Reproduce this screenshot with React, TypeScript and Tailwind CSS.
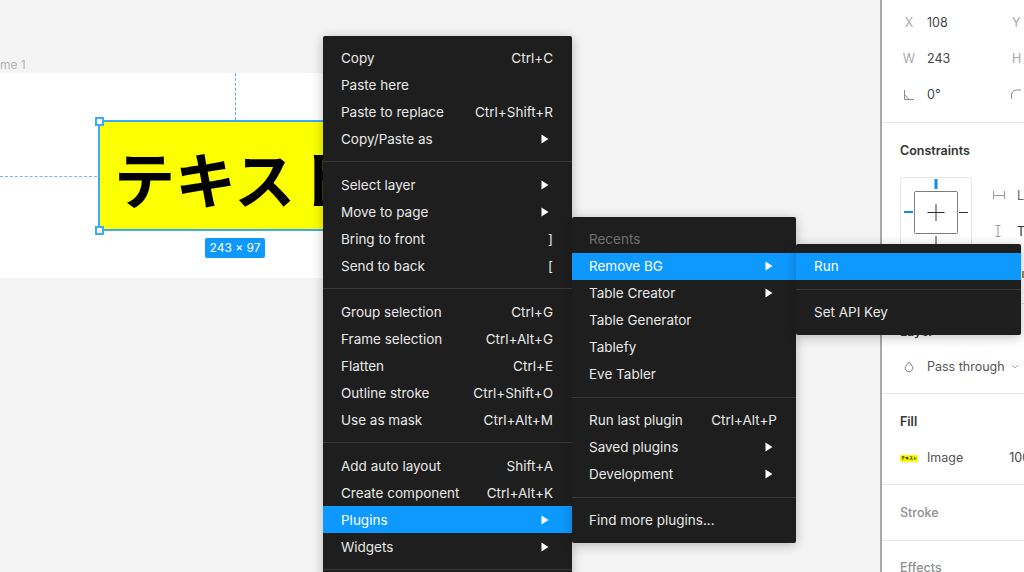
import { Fragment } from "react";

type Item = { label: string; hint?: string; arrow?: boolean; active?: boolean; muted?: boolean };

const mainMenu: Item[][] = [
  [
    { label: "Copy", hint: "Ctrl+C" },
    { label: "Paste here" },
    { label: "Paste to replace", hint: "Ctrl+Shift+R" },
    { label: "Copy/Paste as", arrow: true },
  ],
  [
    { label: "Select layer", arrow: true },
    { label: "Move to page", arrow: true },
    { label: "Bring to front", hint: "]" },
    { label: "Send to back", hint: "[" },
  ],
  [
    { label: "Group selection", hint: "Ctrl+G" },
    { label: "Frame selection", hint: "Ctrl+Alt+G" },
    { label: "Flatten", hint: "Ctrl+E" },
    { label: "Outline stroke", hint: "Ctrl+Shift+O" },
    { label: "Use as mask", hint: "Ctrl+Alt+M" },
  ],
  [
    { label: "Add auto layout", hint: "Shift+A" },
    { label: "Create component", hint: "Ctrl+Alt+K" },
    { label: "Plugins", arrow: true, active: true },
    { label: "Widgets", arrow: true },
  ],
  [],
];

const pluginMenu: Item[][] = [
  [
    { label: "Recents", muted: true },
    { label: "Remove BG", arrow: true, active: true },
    { label: "Table Creator", arrow: true },
    { label: "Table Generator" },
    { label: "Tablefy" },
    { label: "Eve Tabler" },
  ],
  [
    { label: "Run last plugin", hint: "Ctrl+Alt+P" },
    { label: "Saved plugins", arrow: true },
    { label: "Development", arrow: true },
  ],
  [{ label: "Find more plugins..." }],
];

const removeBgMenu: Item[][] = [[{ label: "Run", active: true }], [{ label: "Set API Key" }]];

function Arrow() {
  return (
    <svg width="8" height="10" viewBox="0 0 8 10" className="shrink-0">
      <path d="M0.5 0.5 L7.5 5 L0.5 9.5 Z" fill="#ffffff" />
    </svg>
  );
}

function Menu({ groups, className, rowClass }: { groups: Item[][]; className: string; rowClass: string }) {
  return (
    <div className={`absolute bg-[#1e1e1e] rounded-[2px] shadow-[0_2px_12px_rgba(0,0,0,0.25)] ${className}`}>
      {groups.map((items, i) => (
        <Fragment key={i}>
          {i > 0 && <div className="h-px bg-[#383838] mt-[9px] mb-[9px]" />}
          {items.map((item) => (
            <div
              key={item.label}
              className={`h-[27px] flex items-center justify-between pr-[19px] text-[13.5px] ${rowClass} ${
                item.active ? "bg-[#0d99ff] text-white" : item.muted ? "text-[#6f6f6f]" : "text-[#e8e8e8]"
              }`}
            >
              <span>{item.label}</span>
              {item.hint && <span>{item.hint}</span>}
              {item.arrow && (
                <span className="pr-[4px] flex items-center">
                  <Arrow />
                </span>
              )}
            </div>
          ))}
        </Fragment>
      ))}
    </div>
  );
}

function Canvas() {
  return (
    <div className="flex-1 relative bg-[#f4f4f4] overflow-hidden">
      <div className="absolute left-[-18px] top-[56px] text-[12px] text-[#b3b3b3]">Frame 1</div>
      <div className="absolute left-0 top-[73px] w-[420px] h-[205px] bg-white" />
      <div className="absolute left-[235px] top-[73px] h-[47px] border-l border-dashed border-[#4fb0f8]" />
      <div className="absolute left-0 top-[176px] w-[97px] border-t border-dashed border-[#6dbaf7]" />
      <div className="absolute left-[98px] top-[120px] w-[244px] h-[111px] bg-[#fbff00] border-2 border-[#3daaf9] overflow-hidden">
        <div className="pl-[14px] pt-[25px] text-[61px] leading-none font-bold text-black whitespace-nowrap font-['Noto_Sans_CJK_JP',sans-serif]">
          テキスト
        </div>
      </div>
      <div className="absolute left-[95px] top-[117px] w-[9px] h-[9px] bg-white border-2 border-[#3daaf9]" />
      <div className="absolute left-[95px] top-[226px] w-[9px] h-[9px] bg-white border-2 border-[#3daaf9]" />
      <div className="absolute left-[205px] top-[238px] w-[60px] h-[20px] rounded-[2px] bg-[#0d99ff] text-white text-[12px] flex items-center justify-center">
        243 × 97
      </div>
    </div>
  );
}

function PropRow({ label, value, icon }: { label?: string; value: string; icon?: boolean }) {
  return (
    <div className="h-[36px] flex items-center">
      <span className="w-[24px] text-center text-[#a8a8a8] flex justify-center">
        {icon ? (
          <svg width="12" height="12" viewBox="0 0 12 12" fill="none" stroke="#8a8a8a">
            <path d="M1.500 1v9.500H11M1.500 5.500 6 10.500" />
          </svg>
        ) : (
          label
        )}
      </span>
      <span className="ml-[6px] text-[#444444]">{value}</span>
    </div>
  );
}

function Panel() {
  return (
    <div className="w-[144px] shrink-0 bg-white border-l-2 border-[#a9a9a9] flex flex-col overflow-hidden text-[12.5px]">
      <div className="h-[123px] shrink-0 pt-[5px] pl-[15px] relative border-b border-[#e6e6e6]">
        <PropRow label="X" value="108" />
        <PropRow label="W" value="243" />
        <PropRow value="0°" icon />
        <span className="absolute left-[130px] top-[14px] text-[#a8a8a8]">Y</span>
        <span className="absolute left-[130px] top-[50px] text-[#a8a8a8]">H</span>
        <svg className="absolute left-[129px] top-[89px]" width="10" height="10" viewBox="0 0 10 10" fill="none" stroke="#8a8a8a">
          <path d="M0.500 10V6a5 5 0 0 1 5-5H10" />
        </svg>
      </div>
      <div className="h-[181px] shrink-0 pl-[18px] pt-[19px] border-b border-[#e6e6e6] relative">
        <div className="font-semibold text-[#333333]">Constraints</div>
        <div className="absolute left-[18px] top-[54px] w-[72px] h-[72px] border border-[#e6e6e6] rounded-[2px]" />
        <svg className="absolute left-[20px] top-[56px]" width="68" height="68" viewBox="0 0 68 68" fill="none">
          <rect x="12.500" y="12.500" width="43" height="42" rx="1" stroke="#7d7d7d" />
          <path d="M34 25v17M25.500 33.500h17" stroke="#333333" />
          <path d="M34 0v10" stroke="#0d8ce9" strokeWidth="3" />
          <path d="M2 33h9" stroke="#0d8ce9" strokeWidth="2" />
          <path d="M57 33.500h9M34 57v8" stroke="#333333" />
        </svg>
        <svg className="absolute left-[110px] top-[64px]" width="14" height="56" viewBox="0 0 14 56" fill="none" stroke="#9a9a9a">
          <path d="M1.500 4v8M12.500 4v8M1.500 8.500h11M3.500 38.500h5M3.500 49.500h5M6 38.500v11" />
        </svg>
        <span className="absolute left-[135px] top-[64px] text-[#666666]">L</span>
        <span className="absolute left-[135px] top-[100px] text-[#333333]">T</span>
        <div className="absolute left-[140px] top-[148px] w-[2px] h-[7px] bg-[#b08a45]" />
      </div>
      <div className="h-[90px] shrink-0 pt-[19px] border-b border-[#e6e6e6]">
        <div className="pl-[18px] font-semibold text-[#333333]">Layer</div>
        <div className="mt-[16px] pl-[22px] flex items-center text-[#555555]">
          <svg className="shrink-0" width="10" height="12" viewBox="0 0 10 12" fill="none" stroke="#888888">
            <path d="M5 1 8.500 5.500a3.800 3.800 0 1 1-7 0z" />
          </svg>
          <span className="ml-[13px] whitespace-nowrap">Pass through</span>
          <svg className="ml-[6px] shrink-0" width="8" height="6" viewBox="0 0 8 6" fill="none" stroke="#aaaaaa">
            <path d="M1 1l3 3 3-3" />
          </svg>
        </div>
      </div>
      <div className="h-[91px] shrink-0 pl-[18px] pt-[19px] border-b border-[#e6e6e6]">
        <div className="font-semibold text-[#333333]">Fill</div>
        <div className="mt-[17px] flex items-center text-[#555555]">
          <div className="w-[18px] h-[7px] shrink-0 bg-[#fbff00] flex items-center justify-center text-[4px] leading-none text-black font-bold font-['Noto_Sans_CJK_JP',sans-serif] overflow-hidden whitespace-nowrap">
            テキスト
          </div>
          <span className="ml-[9px]">Image</span>
          <span className="ml-[46px] shrink-0 whitespace-nowrap text-[#444444]">100%</span>
        </div>
      </div>
      <div className="h-[56px] shrink-0 pl-[18px] pt-[19px] border-b border-[#e6e6e6] font-medium text-[#8f8f8f]">Stroke</div>
      <div className="pl-[18px] pt-[18px] font-medium text-[#8f8f8f]">Effects</div>
    </div>
  );
}

export default function App() {
  return (
    <div className="relative w-[1024px] h-[572px] overflow-hidden flex font-['Inter',sans-serif]">
      <Canvas />
      <Panel />
      <Menu groups={mainMenu} rowClass="pl-[18px] pt-px" className="left-[323px] top-[36px] w-[249px] h-[560px] pt-[8px]" />
      <Menu groups={pluginMenu} rowClass="pl-[17px] pb-px" className="left-[572px] top-[217px] w-[224px] pt-[9px] pb-[9px]" />
      <Menu groups={removeBgMenu} rowClass="pl-[18px] pb-px" className="left-[796px] top-[244px] w-[225px] pt-[9px] pb-[9px]" />
    </div>
  );
}
